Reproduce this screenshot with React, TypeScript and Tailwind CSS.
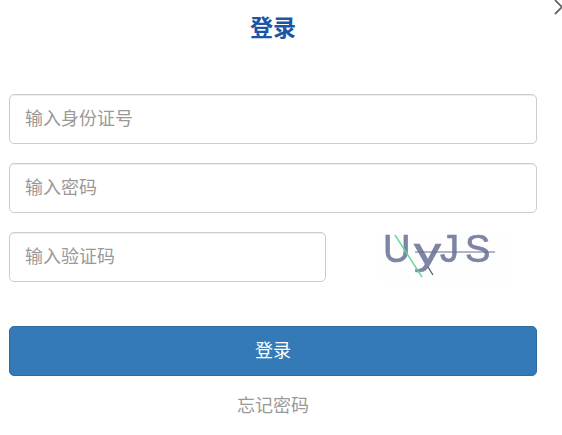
import React from 'react';

const cjk = { fontFamily: '"Noto Sans CJK SC", "Liberation Sans", sans-serif' };

const Captcha = () => (
  <svg width="130" height="50" viewBox="0 0 130 50" className="block">
    <rect width="130" height="50" fill="#fefefe" />
    <g style={{ filter: 'blur(0.7px)' }} fill="#7d84a4" stroke="#7d84a4" strokeWidth="0.7" fontFamily="Liberation Sans">
      <text x="1" y="30" fontSize="38">U</text>
      <text x="32" y="32" fontSize="36" textLength="27" lengthAdjust="spacingAndGlyphs">y</text>
      <text x="58" y="30" fontSize="38">J</text>
      <text x="83" y="30" fontSize="38">S</text>
      <line x1="33" y1="20" x2="113" y2="20" stroke="#666c90" strokeWidth="1" />
      <path d="M13 3 L40 45" stroke="#62d89a" strokeWidth="1.4" fill="none" />
      <path d="M46 35 L51 43" stroke="#4f5468" strokeWidth="1.2" fill="none" />
    </g>
  </svg>
);

const Field = ({ placeholder, className }: { placeholder: string; className: string }) => (
  <input
    placeholder={placeholder}
    style={cjk}
    className={`${className} h-[50px] rounded-[5px] border border-[#cccccc] bg-white pr-4 pb-[4px] pl-[15px] text-[18px] text-[#555] shadow-[inset_0_1px_1px_rgba(0,0,0,0.075)] outline-none placeholder:text-[#999999]`}
  />
);

export default function App() {
  return (
    <div className="relative h-[435px] w-[562px] overflow-hidden bg-white" style={cjk}>
      <svg width="12" height="16" viewBox="0 0 12 16" className="absolute left-[554px] top-0">
        <path d="M1 0 L8 7 L1 14" stroke="#666" strokeWidth="1.8" fill="none" />
        <path d="M8 7 L14 1" stroke="#666" strokeWidth="1.8" fill="none" />
      </svg>

      <div className="flex flex-col pl-[9px] pr-[25px]">
        <h1 className="pt-[10px] pb-[52px] text-center text-[23px] leading-[32px] font-bold text-[#1d55a6]">登录</h1>

        <div className="flex flex-col gap-[19px]">
          <Field placeholder="输入身份证号" className="w-full" />
          <Field placeholder="输入密码" className="w-full" />
          <div className="flex items-start gap-[56px]">
            <Field placeholder="输入验证码" className="w-[317px]" />
            <Captcha />
          </div>
        </div>

        <button className="mt-[44px] h-[50px] w-full rounded-[5px] border border-[#2e6da4] bg-[#337ab7] pb-[4px] text-[18px] text-white">登录</button>

        <a className="pt-[15px] text-center text-[18px] leading-[27px] text-[#999999]">忘记密码</a>
      </div>
    </div>
  );
}
